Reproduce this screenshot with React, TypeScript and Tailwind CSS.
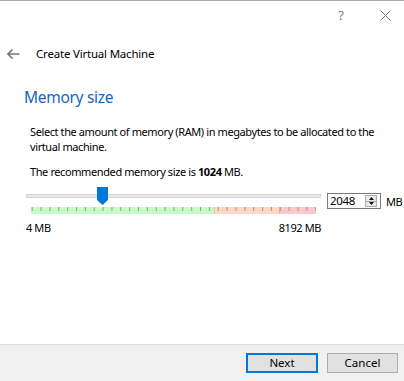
import type React from "react";

const TICK_COUNT = 33;

function Ticks(): React.ReactElement {
	const ticks: number[] = [];
	for (let i = 0; i < TICK_COUNT; i++) {
		ticks.push(0.7 + i * 8.86);
	}
	return (
		<svg width="285" height="7" className="block">
			<rect x="0" y="0" width="183" height="7" fill="#c4fcc4" />
			<rect x="183" y="0" width="65" height="7" fill="#ffd8c4" />
			<rect x="248" y="0" width="37" height="7" fill="#ffc6c6" />
			<rect x="183" y="0" width="1" height="7" fill="#e8c8a0" />
			<rect x="248" y="0" width="1" height="7" fill="#f0a8a8" />
			{ticks.map((x) => (
				<rect key={x} x={x} y="0" width="1" height="4" fill="#9a9a9a" />
			))}
		</svg>
	);
}

function Thumb(): React.ReactElement {
	return (
		<svg width="11" height="18" className="block">
			<path d="M0 0 H11 V13 L5.5 18 L0 13 Z" fill="#0078d7" />
		</svg>
	);
}

function SpinBox(): React.ReactElement {
	return (
		<div className="flex h-[16px] w-[54px] items-center border border-[#7a7a7a] bg-white">
			<span className="ml-[2px] flex-1 text-[11.5px] leading-none tracking-[-0.3px]">2048</span>
			<div className="mr-[3px] flex h-[12px] w-[12px] flex-col border border-[#adadad] bg-[#e8e8e8]">
				<div className="flex flex-1 items-center justify-center border-b border-[#adadad]">
					<svg width="5" height="3">
						<path d="M0 3 L2.5 0 L5 3 Z" fill="#111" />
					</svg>
				</div>
				<div className="flex flex-1 items-center justify-center">
					<svg width="5" height="3">
						<path d="M0 0 L2.5 3 L5 0 Z" fill="#111" />
					</svg>
				</div>
			</div>
		</div>
	);
}

export default function App(): React.ReactElement {
	return (
		<div
			className="flex h-[381px] w-[404px] flex-col overflow-hidden border-t border-[#a9a9a9] bg-white text-black"
			style={{ fontFamily: '"Noto Sans", "Open Sans", sans-serif' }}
		>
			<div className="flex h-[29px] items-center justify-end">
				<span className="mr-[36px] text-[13px] leading-none text-[#777]">?</span>
				<svg width="11" height="11" className="mr-[13px]">
					<path d="M0.5 0.5 L10.5 10.5 M10.5 0.5 L0.5 10.5" stroke="#777" strokeWidth="1" />
				</svg>
			</div>

			<div className="mt-[11px] flex h-[26px] items-center">
				<svg width="13" height="10" className="ml-[7px]">
					<path d="M5.5 0.5 L1 5 L5.5 9.5 M1 5 H12.5" stroke="#777" strokeWidth="1.6" fill="none" />
				</svg>
				<span className="ml-[16px] text-[11.5px] tracking-[-0.2px]">Create Virtual Machine</span>
			</div>

			<h1 className="mt-[20px] ml-[24px] h-[20px] text-[15.5px] leading-[20px] tracking-[-0.3px] text-[#1565c8]">
				Memory size
			</h1>

			<p className="mt-[17px] ml-[30px] whitespace-nowrap text-[11px] leading-[15px] tracking-[-0.4px]">
				Select the amount of memory (RAM) in megabytes to be allocated to the
				<br />
				virtual machine.
			</p>

			<p className="mt-[10px] ml-[30px] whitespace-nowrap text-[11px] leading-[15px] tracking-[-0.4px]">
				The recommended memory size is <b>1024</b> MB.
			</p>

			<div className="mt-[8px] flex items-start">
				<div className="ml-[26px] w-[295px]">
					<div className="relative h-[20px]">
						<div className="absolute left-0 right-0 top-[7px] h-[4px] border border-[#d6d6d6] bg-[#e7e7e7]" />
						<div className="absolute left-[71px] top-0">
							<Thumb />
						</div>
					</div>
					<div className="ml-[5px]">
						<Ticks />
					</div>
					<div className="mt-[6px] flex justify-between text-[11px] leading-[15px] tracking-[-0.4px]">
						<span>4 MB</span>
						<span>8192 MB</span>
					</div>
				</div>
				<div className="mt-[6px] ml-[6px]">
					<SpinBox />
				</div>
				<span className="mt-[7px] ml-[5px] text-[11px] leading-[15px] tracking-[-0.4px]">MB</span>
			</div>

			<div className="mt-auto flex h-[37px] items-center justify-end border-t border-[#dfdfdf] bg-[#f0f0f0]">
				<button className="mr-[9px] h-[20px] w-[72px] border-2 border-[#0078d7] bg-[#e1e1e1] text-[11.5px] leading-none">
					Next
				</button>
				<button className="mr-[6px] h-[20px] w-[71px] border border-[#adadad] bg-[#e1e1e1] text-[11.5px] leading-none">
					Cancel
				</button>
			</div>
		</div>
	);
}
